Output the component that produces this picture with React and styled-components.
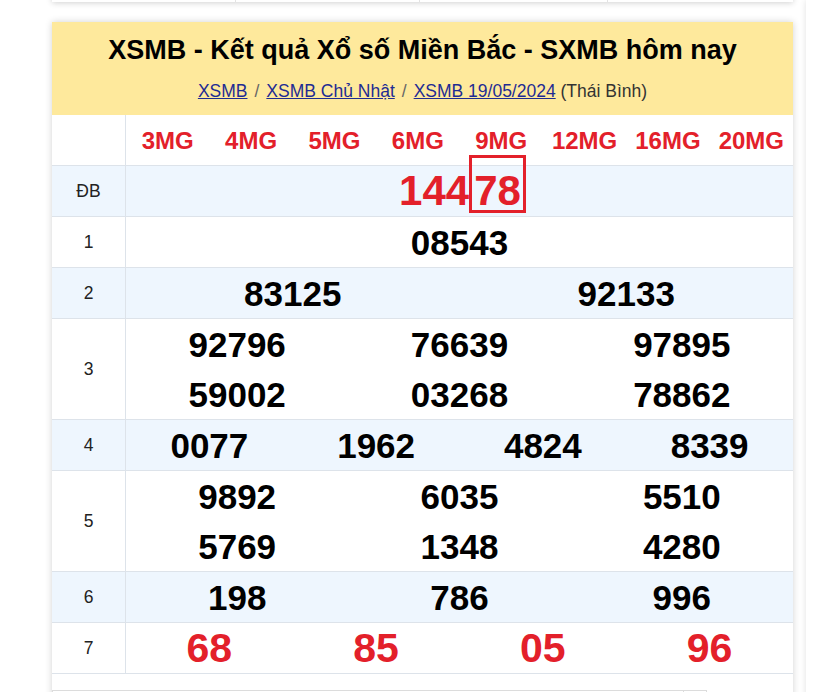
import styled, { createGlobalStyle } from "styled-components";

const GlobalStyle = createGlobalStyle`
  html, body {
    margin: 0;
    padding: 0;
    background: #fff;
    font-family: "Liberation Sans", Arial, sans-serif;
    overflow: hidden;
  }
`;

const Page = styled.div`
  display: flex;
  align-items: flex-start;
  width: 813px;
  height: 692px;
  overflow: hidden;
`;

const MainColumn = styled.div`
  flex: 0 0 741px;
  margin-left: 52px;
  display: flex;
  flex-direction: column;
  gap: 20px;
`;

const SideCard = styled.div`
  flex: 1;
  margin-left: 13px;
  height: 700px;
  background: #fff;
  box-shadow: 0 0 6px rgba(0, 0, 0, 0.12);
`;

const TopCard = styled.div`
  display: grid;
  grid-template-columns: 184px 184px 188px 1fr;
  height: 40px;
  margin-top: -38px;
  background: #fff;
  box-shadow: 0 1px 6px rgba(0, 0, 0, 0.18);
`;

const TopCell = styled.div`
  border-right: ${p => (p.$last ? "none" : "1px solid #e3e3e3")};
`;

const Card = styled.div`
  background: #fff;
  box-shadow: 0 0 7px rgba(0, 0, 0, 0.18);
  padding-bottom: 40px;
`;

const Header = styled.div`
  background: #fee99c;
  padding: 13px 10px 12px;
  text-align: center;
`;

const Title = styled.h1`
  margin: 0 0 13px;
  font-size: 27px;
  line-height: 31px;
  font-weight: 700;
  color: #000;
`;

const Crumbs = styled.div`
  font-size: 17.5px;
  line-height: 24px;
  color: #333;
`;

const Crumb = styled.a`
  color: #1f2c93;
  text-decoration: underline;
`;

const Sep = styled.span`
  color: #666;
  margin: 0 7px;
`;

const Row = styled.div`
  display: grid;
  grid-template-columns: 74px 1fr;
  border-bottom: 1px solid #dde3ea;
  background: ${p => (p.$alt ? "#eef6fe" : "#fff")};
`;

const Label = styled.div`
  display: flex;
  align-items: center;
  justify-content: center;
  border-right: 1px solid #dde3ea;
  font-size: 17.5px;
  color: #222;
`;

const Values = styled.div`
  display: grid;
  grid-template-columns: repeat(${p => p.$cols}, 1fr);
  grid-auto-rows: 50px;
  align-items: center;
  text-align: center;
`;

const Mg = styled.div`
  font-size: 24px;
  font-weight: 700;
  color: #e3202a;
  padding-top: 2px;
`;

const Num = styled.div`
  font-size: ${p => (p.$big ? "41px" : "35px")};
  line-height: 1;
  font-weight: 700;
  color: ${p => (p.$red ? "#e3202a" : "#000")};
`;

const Special = styled.div`
  font-size: 42px;
  line-height: 1;
  font-weight: 700;
  color: #e3202a;
  padding-left: 6px;
`;

const Boxed = styled.span`
  display: inline-block;
  border: 3px solid #e3202a;
  padding: 14px 2px 0;
  line-height: 38px;
  margin-top: -14px;
`;

const Footer = styled.div`
  display: flex;
  margin: 16px 86px 0 0;
  border: 1px solid #dcdcdc;
  height: 32px;
`;

const FooterItem = styled.div`
  flex: ${p => (p.$grow ? 1 : "0 0 22px")};
  border-left: ${p => (p.$grow ? "none" : "1px solid #dcdcdc")};
`;

const mgs = ["3MG", "4MG", "5MG", "6MG", "9MG", "12MG", "16MG", "20MG"];

const prizes = [
  { label: "1", cols: 1, nums: ["08543"] },
  { label: "2", cols: 2, nums: ["83125", "92133"], alt: true },
  { label: "3", cols: 3, nums: ["92796", "76639", "97895", "59002", "03268", "78862"] },
  { label: "4", cols: 4, nums: ["0077", "1962", "4824", "8339"], alt: true },
  { label: "5", cols: 3, nums: ["9892", "6035", "5510", "5769", "1348", "4280"] },
  { label: "6", cols: 3, nums: ["198", "786", "996"], alt: true },
  { label: "7", cols: 4, nums: ["68", "85", "05", "96"], red: true },
];

export default function App() {
  return (
    <Page>
      <GlobalStyle />
      <MainColumn>
        <TopCard>
          <TopCell />
          <TopCell />
          <TopCell />
          <TopCell $last />
        </TopCard>
        <Card>
          <Header>
            <Title>XSMB - Kết quả Xổ số Miền Bắc - SXMB hôm nay</Title>
            <Crumbs>
              <Crumb href="#">XSMB</Crumb>
              <Sep>/</Sep>
              <Crumb href="#">XSMB Chủ Nhật</Crumb>
              <Sep>/</Sep>
              <Crumb href="#">XSMB 19/05/2024</Crumb> (Thái Bình)
            </Crumbs>
          </Header>

          <Row>
            <Label />
            <Values $cols={8}>
              {mgs.map(m => (
                <Mg key={m}>{m}</Mg>
              ))}
            </Values>
          </Row>

          <Row $alt>
            <Label>ĐB</Label>
            <Values $cols={1}>
              <Special>
                144<Boxed>78</Boxed>
              </Special>
            </Values>
          </Row>

          {prizes.map(p => (
            <Row key={p.label} $alt={p.alt}>
              <Label>{p.label}</Label>
              <Values $cols={p.cols}>
                {p.nums.map((n, i) => (
                  <Num key={i} $red={p.red} $big={p.red}>
                    {n}
                  </Num>
                ))}
              </Values>
            </Row>
          ))}

          <Footer>
            <FooterItem $grow />
            <FooterItem />
          </Footer>
        </Card>
      </MainColumn>
      <SideCard />
    </Page>
  );
}
